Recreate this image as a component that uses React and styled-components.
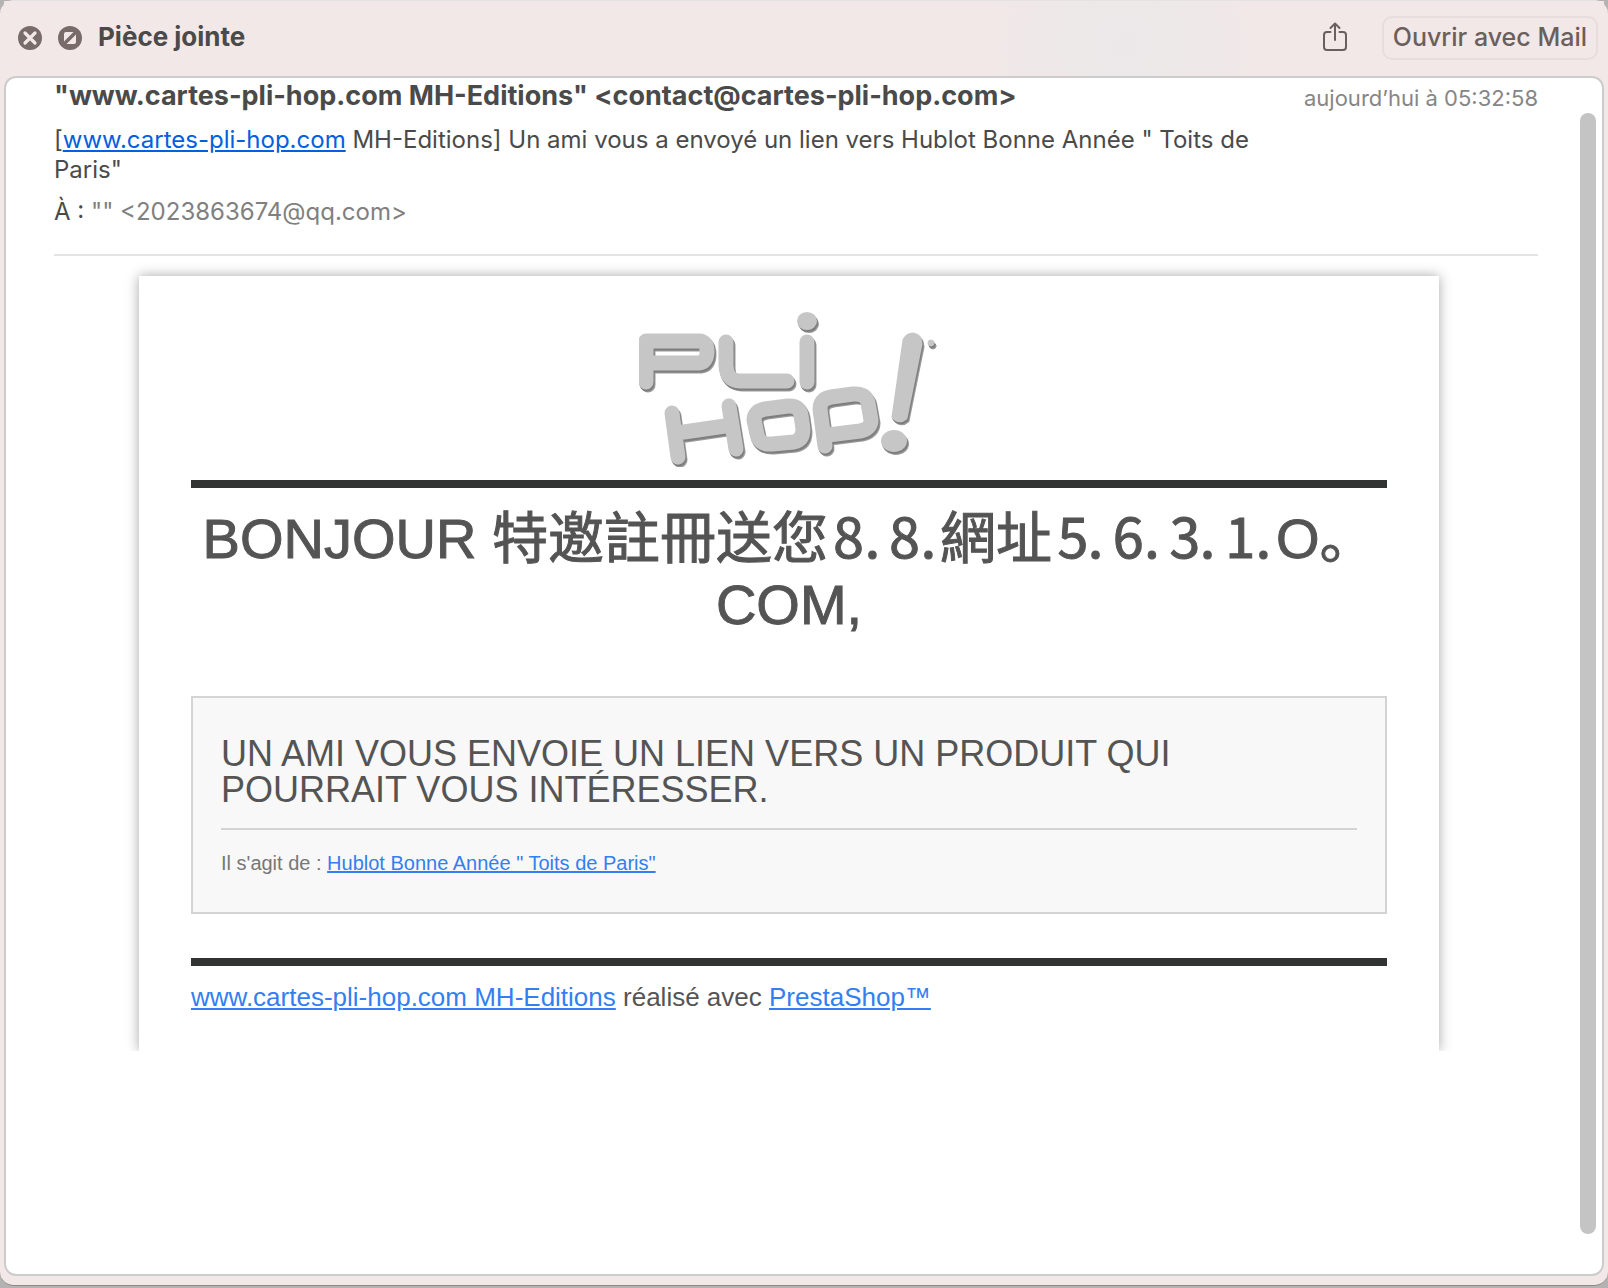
import React from "react";
import styled, { createGlobalStyle } from "styled-components";

const GlobalStyle = createGlobalStyle`
  * {
    box-sizing: border-box;
  }
  body {
    margin: 0;
    background: #b4b2b2;
    font-family: Inter, "Liberation Sans", sans-serif;
    color: #4a4a4a;
  }
`;

const Desktop = styled.div`
  display: flex;
  min-height: 100vh;
  padding-bottom: 2px;
`;

const Window = styled.div`
  flex: 1;
  display: flex;
  flex-direction: column;
  padding: 0 4px 9px;
  border-top: 1px solid #e4e2e2;
  border-bottom: 1px solid #8e8a8a;
  border-radius: 14px;
  background: #f2e8e7;
`;

const Toolbar = styled.header`
  display: flex;
  align-items: center;
  height: 75px;
  padding: 0 6px 2px 14px;
  background: radial-gradient(
    circle at 70% 60%,
    #ece8e9 0,
    #eee8e8 80px,
    #f2e8e7 150px
  );
`;

const IconButton = styled.button`
  display: flex;
  padding: 0;
  margin-right: ${(props) => props.$gap || "16px"};
  border: 0;
  background: none;
`;

const Title = styled.h1`
  flex: 1;
  margin: 0;
  padding-bottom: 2px;
  font-size: 26px;
  font-weight: 700;
  line-height: 32px;
`;

const OpenButton = styled.button`
  height: 44px;
  padding: 0 9px 2px;
  border: 2px solid #e7dddc;
  border-radius: 10px;
  background: none;
  color: #6b5f5d;
  font-family: inherit;
  font-size: 25px;
  font-weight: 500;
  line-height: 32px;
`;

const Pane = styled.main`
  flex: 1;
  display: flex;
  border: 2px solid #cbcccb;
  border-radius: 12px;
  background: #fff;
`;

const Message = styled.article`
  flex: 1;
  min-width: 0;
`;

const Scrollbar = styled.div`
  display: flex;
  width: 30px;
  padding: 35px 6px 40px 8px;
`;

const Thumb = styled.div`
  flex: 1;
  border-radius: 8px;
  background: #c4c4c4;
`;

const MailHeader = styled.header`
  display: grid;
  grid-template-columns: minmax(0, 1200px) auto;
  justify-content: space-between;
  row-gap: 12px;
  margin: 0 34px 20px 48px;
  padding-bottom: 27px;
  border-bottom: 2px solid #e4e4e4;
  font-size: 24px;
  line-height: 30px;
`;

const Sender = styled.div`
  padding-top: 3px;
  font-size: 27px;
  font-weight: 700;
`;

const SentAt = styled.time`
  padding-top: 5px;
  color: #868686;
  font-size: 22px;
`;

const Line = styled.div`
  grid-column: 1;
`;

const Muted = styled.span`
  color: #808080;
`;

const Link = styled.a`
  color: ${(props) => props.$color || "#337ff1"};
`;

const CardClip = styled.div`
  overflow: hidden;
  margin-top: -20px;
  padding-top: 20px;
`;

const Card = styled.section`
  max-width: 1300px;
  margin: 0 auto;
  padding: 36px 52px 39px;
  background: #fff;
  box-shadow: 0 0 12px rgba(0, 0, 0, 0.35);
  font-family: "Liberation Sans", "Noto Sans CJK SC", "Noto Sans CJK TC",
    sans-serif;
  color: #555454;
`;

const LogoRow = styled.div`
  display: flex;
  justify-content: center;
  padding-bottom: 13px;
  border-bottom: 8px solid #323333;
`;

const Greeting = styled.h2`
  margin: 18px 0 58px;
  font-size: 56px;
  font-weight: 400;
  line-height: 66px;
  text-align: center;
  -webkit-text-stroke: 1px currentColor;
`;

const Box = styled.div`
  padding: 38px 28px 37px;
  border: 2px solid #d4d4d4;
  background: #f8f8f8;
`;

const BoxTitle = styled.h3`
  margin: 0;
  padding-bottom: 20px;
  border-bottom: 2px solid #d4d4d4;
  font-size: 36px;
  font-weight: 400;
  line-height: 36px;
`;

const BoxText = styled.p`
  margin: 21px 0 0;
  color: #777777;
  font-size: 20px;
  line-height: 24px;
`;

const Footer = styled.footer`
  margin-top: 44px;
  padding-top: 16px;
  border-top: 8px solid #323333;
  font-size: 26px;
  line-height: 30px;
`;

function CloseIcon() {
  return (
    <svg width="24" height="24" viewBox="0 0 24 24">
      <circle cx="12" cy="12" r="12" fill="#786b69" />
      <path
        d="M7 7l10 10M17 7l-10 10"
        stroke="#f2e8e7"
        strokeWidth="3.200"
        strokeLinecap="round"
      />
    </svg>
  );
}

function ZoomIcon() {
  return (
    <svg width="24" height="24" viewBox="0 0 24 24">
      <circle cx="12" cy="12" r="12" fill="#786b69" />
      <path
        d="M6 15.500V8a2 2 0 0 1 2-2h7.500zM8.500 18H16a2 2 0 0 0 2-2V8.500z"
        fill="#f2e8e7"
      />
    </svg>
  );
}

function ShareIcon() {
  return (
    <svg
      width="24"
      height="32"
      viewBox="0 0 24 32"
      fill="none"
      stroke="#6b5f5d"
      strokeWidth="2"
      strokeLinecap="round"
      strokeLinejoin="round"
    >
      <path d="M7.500 10H4a3 3 0 0 0-3 3v12a3 3 0 0 0 3 3h16a3 3 0 0 0 3-3V13a3 3 0 0 0-3-3h-3.500" />
      <path d="M12 18V2M7.500 6L12 1.500 16.500 6" />
    </svg>
  );
}

// letters are thick rounded strokes, drawn twice for the raised edge
function LogoShape({ color }) {
  return (
    <g
      fill="none"
      stroke={color}
      strokeWidth="15"
      strokeLinecap="round"
      strokeLinejoin="round"
    >
      <path d="M7 70V29H60Q68 29 68 39.500T60 51H10" />
      <path d="M87 30V54Q88 69 101 69H148" />
      <path d="M168 30V70" />
      <path d="M33 101L39 145M90 94L97 137M38 121L93 113" />
      <path d="M126 97L149 94Q160 93 162 103L164 117Q164 128 155 130L133 132Q120 133 118 122L115 108Q115 99 126 97Z" />
      <path d="M186 134L181 97Q181 87 192 85L214 82Q227 81 229 91L232 108Q232 117 221 119L189 123" />
      <ellipse cx="168" cy="9" rx="9" ry="8" fill={color} strokeWidth="2" />
      <path
        d="M265 28Q268 22 274 22Q282 23 282 32L267 106Q260 112 254 105Z"
        strokeWidth="3"
        fill={color}
      />
      <ellipse cx="255" cy="129" rx="12" ry="10" fill={color} strokeWidth="2" />
      <circle cx="292" cy="31" r="3" fill={color} strokeWidth="1" />
    </g>
  );
}

function Logo() {
  return (
    <svg width="300" height="155" viewBox="0 0 300 155" role="img" aria-label="Pli Hop!">
      <g transform="translate(2 3)">
        <LogoShape color="#9c9c9c" />
      </g>
      <g transform="translate(1 2)">
        <LogoShape color="#7e7e7e" />
      </g>
      <LogoShape color="#c6c6c6" />
    </svg>
  );
}

export default function App() {
  return (
    <Desktop>
      <GlobalStyle />
      <Window>
        <Toolbar>
          <IconButton aria-label="Fermer">
            <CloseIcon />
          </IconButton>
          <IconButton aria-label="Plein écran">
            <ZoomIcon />
          </IconButton>
          <Title>Pièce jointe</Title>
          <IconButton aria-label="Partager" $gap="35px">
            <ShareIcon />
          </IconButton>
          <OpenButton>Ouvrir avec Mail</OpenButton>
        </Toolbar>
        <Pane>
          <Message>
            <MailHeader>
              <Sender>
                "www.cartes-pli-hop.com MH-Editions" &lt;contact@cartes-pli-hop.com&gt;
              </Sender>
              <SentAt>aujourd’hui à 05:32:58</SentAt>
              <Line>
                [<Link href="#" $color="#0060df">www.cartes-pli-hop.com</Link>{" "}
                MH-Editions] Un ami vous a envoyé un lien vers Hublot Bonne Année
                " Toits de Paris"
              </Line>
              <Line>
                À : <Muted>"" &lt;2023863674@qq.com&gt;</Muted>
              </Line>
            </MailHeader>
            <CardClip>
              <Card>
                <LogoRow>
                  <Logo />
                </LogoRow>
                <Greeting>BONJOUR 特邀註冊送您⒏⒏網址⒌⒍⒊⒈O。COM,</Greeting>
                <Box>
                  <BoxTitle>
                    UN AMI VOUS ENVOIE UN LIEN VERS UN PRODUIT QUI POURRAIT VOUS
                    INTÉRESSER.
                  </BoxTitle>
                  <BoxText>
                    Il s'agit de :{" "}
                    <Link href="#">Hublot Bonne Année " Toits de Paris"</Link>
                  </BoxText>
                </Box>
                <Footer>
                  <Link href="#">www.cartes-pli-hop.com MH-Editions</Link> réalisé
                  avec <Link href="#">PrestaShop™</Link>
                </Footer>
              </Card>
            </CardClip>
          </Message>
          <Scrollbar>
            <Thumb />
          </Scrollbar>
        </Pane>
      </Window>
    </Desktop>
  );
}
